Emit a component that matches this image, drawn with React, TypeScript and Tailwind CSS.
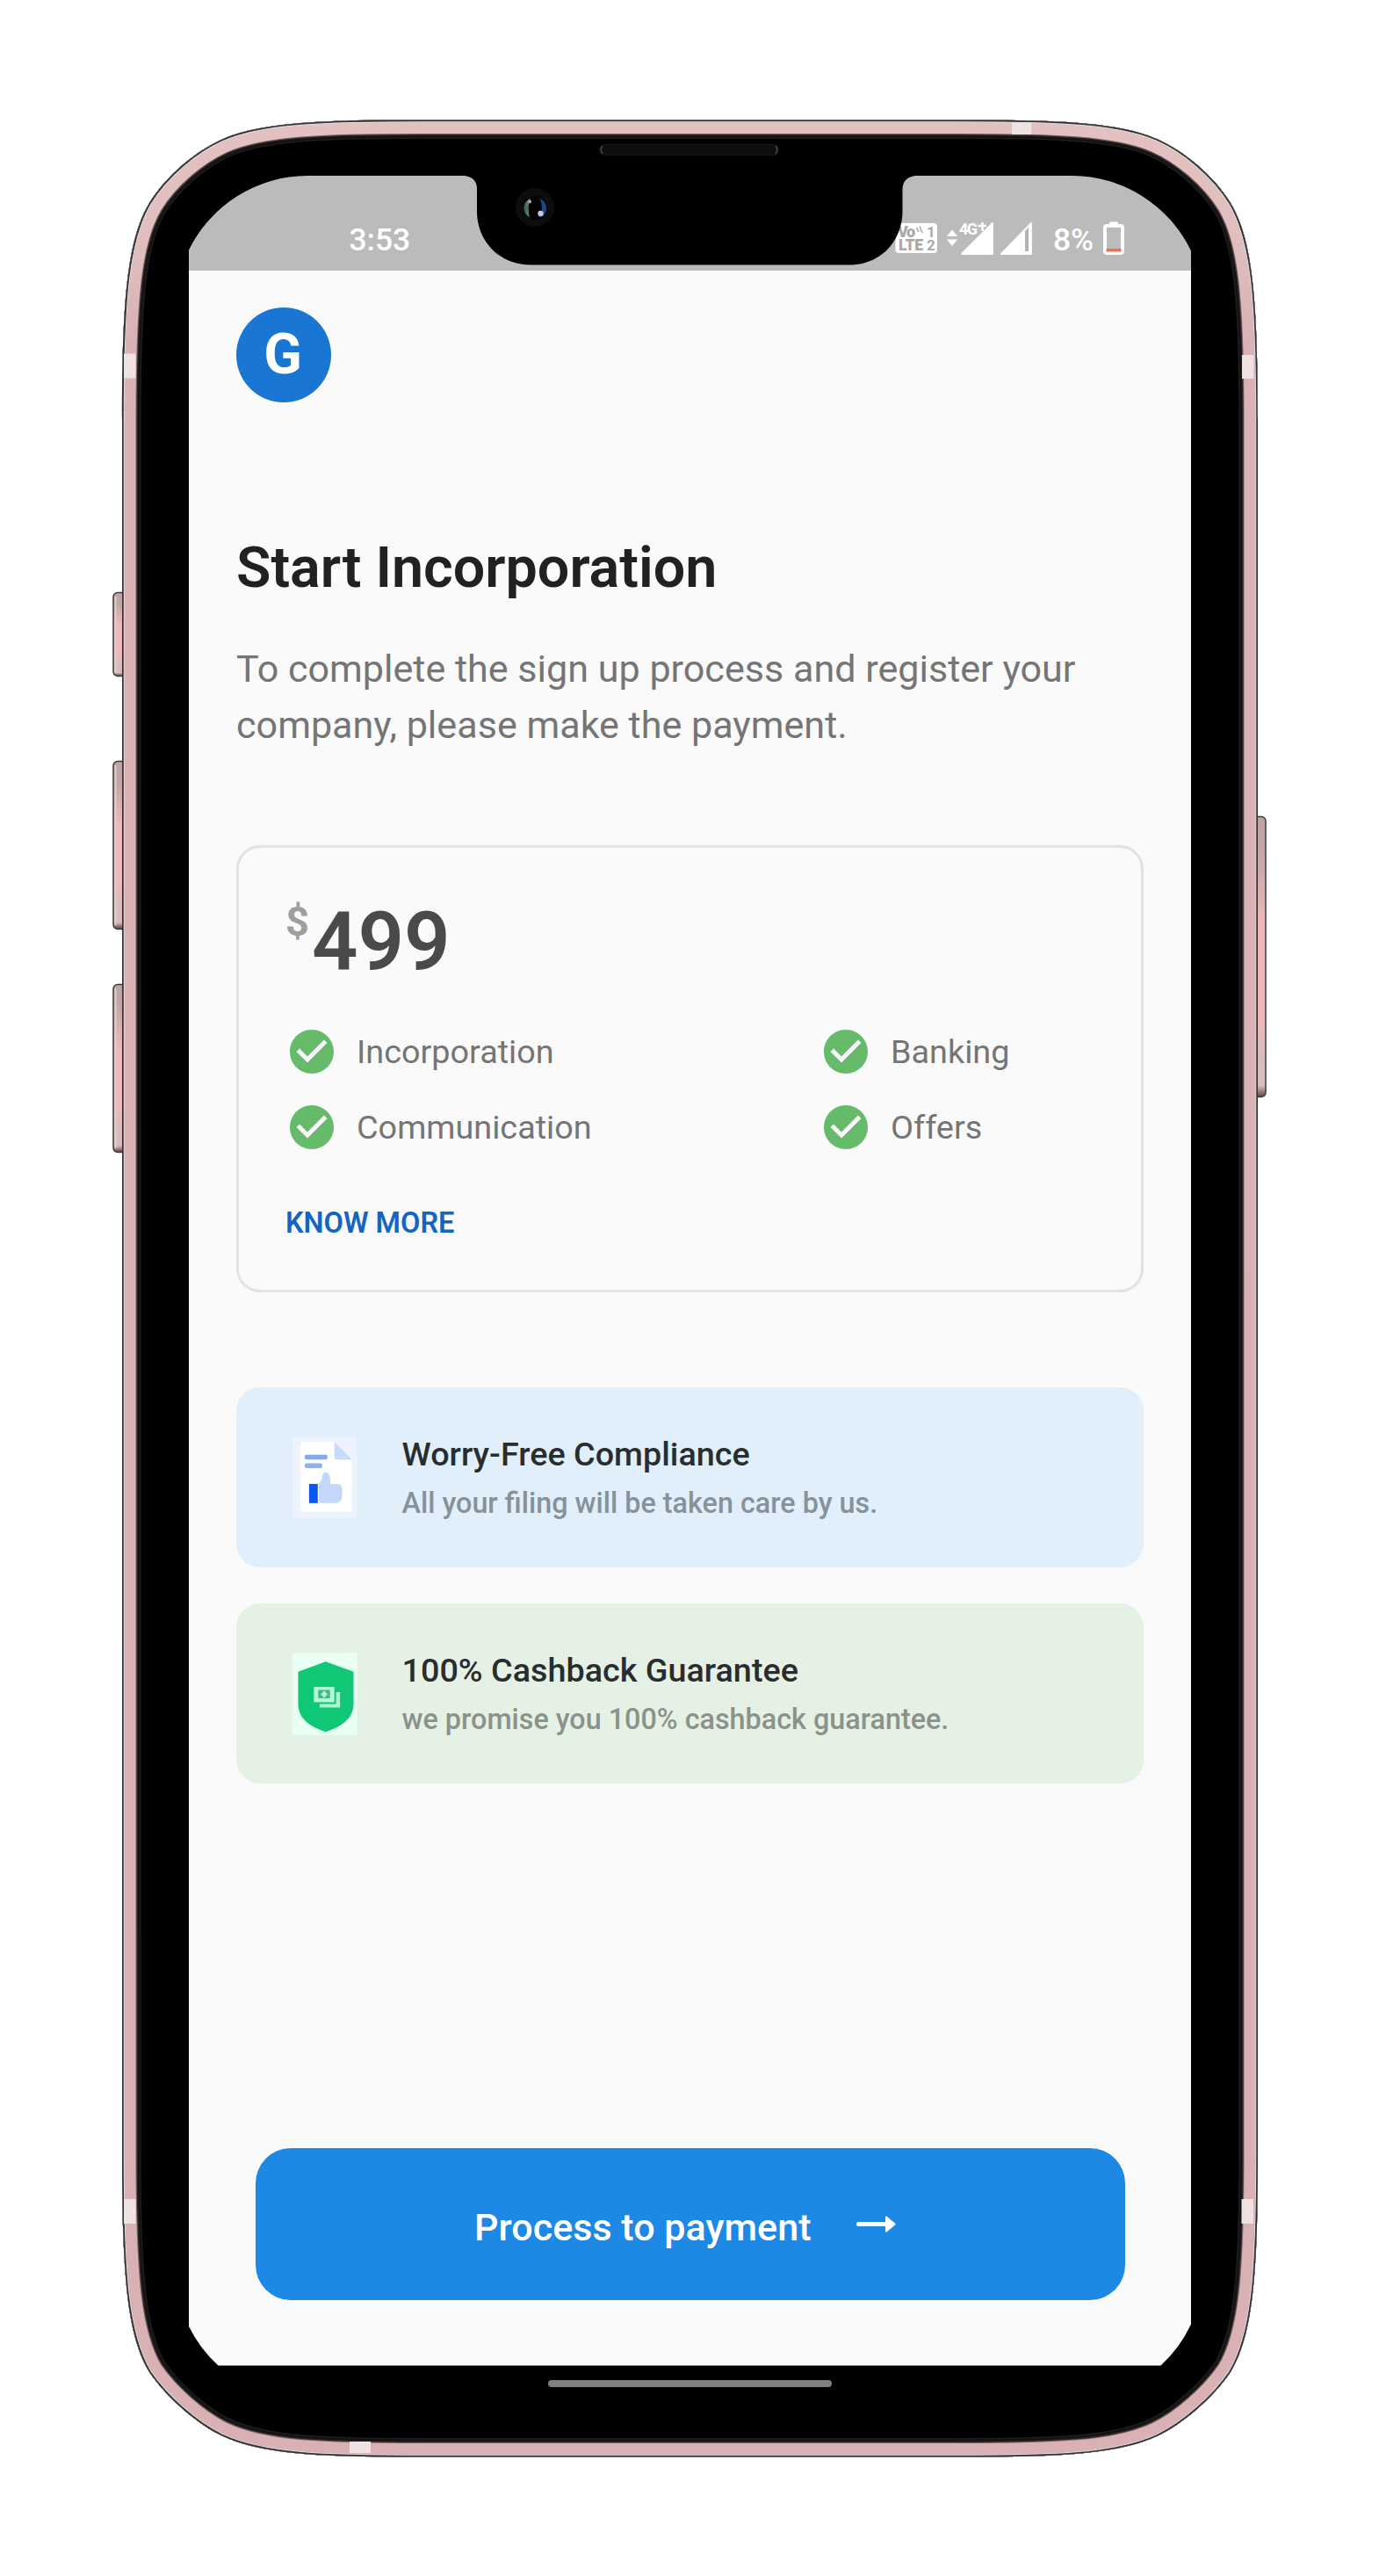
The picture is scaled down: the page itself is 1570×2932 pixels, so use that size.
import React from "react";
import { MdCheckCircle } from "react-icons/md";

const OUTER =
  "M139 480C139 340 145 273 170 231C190 199 223 172 253 158.500C298 138.500 370 136.5 480 136.5H1091C1201 136.5 1273 138.500 1318 158.500C1348 172 1381 199 1401 231C1426 273 1432 340 1432 480V2452C1432 2592 1426 2658 1401 2700C1382 2728 1347 2759 1318 2772.500C1271 2794.500 1201 2796.5 1091 2796.5H480C370 2796.5 300 2794.500 253 2772.500C224 2759 189 2728 170 2700C145 2658 139 2592 139 2452Z";

const SCREEN =
  "M215 284.5A151 151 0 0 1 350 200H529Q543 202 543 215V240C543 276 570 301.5 604 301.5H967C1001 301.5 1027.500 276 1027.500 240V215Q1028 202 1042 200H1221A151 151 0 0 1 1356 285.500V2645.500A151 151 0 0 1 1321.500 2692.500H248.500A151 151 0 0 1 215 2648Z";

function SideButton({ x, y, w, h, fill }: { x: number; y: number; w: number; h: number; fill: string }) {
  return <rect x={x} y={y} width={w} height={h} rx="5" fill={fill} stroke="#40383a" strokeWidth="1.5" />;
}

function PhoneFrame() {
  return (
    <svg className="pointer-events-none absolute inset-0" width="1570" height="2932" viewBox="0 0 1570 2932">
      <defs>
        <clipPath id="body">
          <path d={`${OUTER}${SCREEN}`} clipRule="evenodd" />
        </clipPath>
        <linearGradient id="pink" gradientUnits="userSpaceOnUse" x1="0" y1="136" x2="0" y2="2797">
          <stop offset="0" stopColor="#e3c1c0" />
          <stop offset="0.05" stopColor="#e1bfbf" />
          <stop offset="0.09" stopColor="#d9b3b6" />
          <stop offset="1" stopColor="#d9b1b4" />
        </linearGradient>
        <linearGradient id="key" x1="0" y1="0" x2="0" y2="1">
          <stop offset="0" stopColor="#bda5a3" />
          <stop offset="0.12" stopColor="#c3a5a4" />
          <stop offset="0.38" stopColor="#efb7b9" />
          <stop offset="0.72" stopColor="#efb7b9" />
          <stop offset="0.85" stopColor="#dabcbc" />
          <stop offset="0.96" stopColor="#dabcbc" />
          <stop offset="1" stopColor="#5e4146" />
        </linearGradient>
        <linearGradient id="lensL" x1="0" y1="0" x2="1" y2="0">
          <stop offset="0" stopColor="#3d5a4c" />
          <stop offset="1" stopColor="#6a8c79" />
        </linearGradient>
      </defs>
      <SideButton x={129} y={674.5} w={16} h={95} fill="url(#key)" />
      <SideButton x={129} y={866.5} w={16} h={191} fill="url(#key)" />
      <SideButton x={129} y={1120.5} w={16} h={191} fill="url(#key)" />
      <SideButton x={1425} y={929.5} w={16} h={319} fill="url(#key)" />
      <path d="M131.500 679V765M131.500 871V1053M131.500 1125V1307" stroke="#dccfce" strokeWidth="2" />
      <path d={`${OUTER}${SCREEN}`} fill="#000" fillRule="evenodd" />
      <g clipPath="url(#body)" fill="none">
        <path d={OUTER} stroke="#1e1e1e" strokeWidth="43" />
        <path d={OUTER} stroke="#121212" strokeWidth="40" />
        <path d={OUTER} stroke="#2b2324" strokeWidth="36" />
        <path d={OUTER} stroke="#7d6567" strokeWidth="33" />
        <path d={OUTER} stroke="url(#pink)" strokeWidth="31" />
        <path d={OUTER} stroke="#e9e6ea" strokeWidth="5" />
        <path d={OUTER} stroke="#303438" strokeWidth="3.500" />
      </g>
      <g fill="#efe2e3">
        <rect x="1152" y="140" width="22" height="13" />
        <rect x="398" y="2779" width="24" height="13" />
        <rect x="141" y="402.500" width="13.500" height="28" />
        <rect x="1414" y="404" width="13.500" height="27" />
        <rect x="141" y="2503" width="13.500" height="28" />
        <rect x="1413.500" y="2503" width="13.500" height="28" />
      </g>
      <rect x="682.500" y="164.500" width="204" height="12" rx="6" fill="#0e0e0e" stroke="#181818" />
      <path d="M686 166Q682.500 170 686 175M883 166Q886.500 170 883 175" fill="none" stroke="#484848" strokeWidth="1.500" />
      <circle cx="609" cy="236" r="22" fill="#0d0d0d" />
      <circle cx="609" cy="236.500" r="13.500" fill="#030303" />
      <path d="M604 226C599 228 596 232 596.500 238C597 243 600 246 603 247C601 240 601 232 604 226Z" fill="url(#lensL)" />
      <path d="M614 226C620 228 622.500 233 622 239C621 244 618 247 614 247C618 240 618 232 614 226Z" fill="#174a86" />
      <circle cx="603" cy="229.500" r="2" fill="#9fb0a7" />
      <circle cx="615.500" cy="243" r="3.200" fill="#cfc4d8" />
      <circle cx="609" cy="236.500" r="5" fill="#000" />
      <rect x="624" y="2709" width="323" height="8" rx="4" fill="#808080" />
    </svg>
  );
}

function NetworkIcons() {
  return (
    <svg width="160" height="44" viewBox="1017 249 160 44" className="block" fontFamily="Roboto, sans-serif">
      <rect x="1019.500" y="254" width="47.500" height="34" rx="4" fill="#fff" />
      <g fill="#a8a8a8" fontWeight="900">
        <text x="1022" y="269.500" fontSize="18" textLength="20">Vo</text>
        <text x="1055" y="269.500" fontSize="17" fontWeight="700">1</text>
        <text x="1023" y="284.500" fontSize="17.500" textLength="28">LTE</text>
        <text x="1055" y="284.500" fontSize="17" fontWeight="700">2</text>
      </g>
      <path d="M1043.500 259L1046 264M1047 257.500L1050 265" stroke="#b3b3b3" strokeWidth="1.800" />
      <path d="M1078 269L1084 261.500L1090 269ZM1078 272.500H1090L1084 280Z" fill="#fff" />
      <text x="1092" y="267" fontSize="18" fontWeight="700" fill="#fff" textLength="21">4G</text>
      <path d="M1118.500 253V263M1113.500 257H1123" stroke="#fff" strokeWidth="2.500" />
      <path d="M1095 289L1130 254V289Z" fill="#fff" stroke="#fff" strokeWidth="1.800" strokeLinejoin="round" />
      <path d="M1140 289L1174 254V289Z" fill="#fff" stroke="#fff" strokeWidth="1.800" strokeLinejoin="round" />
      <path d="M1167 263L1171 258.500V286H1167Z" fill="#b3b3b3" />
    </svg>
  );
}

function BatteryIcon() {
  return (
    <svg width="24" height="38" viewBox="0 0 24 38" className="block">
      <path d="M7 3V1.500Q7 .5 8 .5H16Q17 .5 17 1.500V3H20Q24 3 24 7V34Q24 38 20 38H4Q0 38 0 34V7Q0 3 4 3Z" fill="#fff" />
      <rect x="4" y="7" width="16" height="24" fill="#bbb" />
      <rect x="3.500" y="31" width="17" height="3.500" fill="#f0704d" />
    </svg>
  );
}

function DocumentIcon() {
  return (
    <svg width="73.500" height="94" viewBox="0 0 74 94" className="block">
      <rect width="74" height="94" fill="#eef2fe" />
      <path d="M10 6H48L68 26V84Q68 86 66 86H12Q9 86 9 84V8Q9 6 10 6Z" fill="#fff" />
      <path d="M48 6L68 26H51Q48 26 48 23Z" fill="#c8dafb" />
      <rect x="14" y="20.500" width="26" height="5.500" rx="2" fill="#86aae9" />
      <rect x="14" y="30.500" width="20" height="5.500" rx="2" fill="#8fb0ea" />
      <rect x="19" y="54" width="10" height="22" fill="#0b57f0" />
      <path d="M30 54C33 51 34 48 34.500 44Q35 40 38.500 40.500Q44 42 43.500 54H52Q57 55 57 60V67Q57 76 49 76H30Z" fill="#c4d8fb" />
    </svg>
  );
}

function ShieldIcon() {
  return (
    <svg width="73.500" height="94" viewBox="0 0 74 94" className="block">
      <rect width="74" height="94" fill="#e8fff3" />
      <path d="M38 10L70 21.500V58C70 75 57 84 38 90.500C19 84 6.500 75 6.500 58V21.500Z" fill="#10c775" />
      <path d="M52 45H54.500V62.500H31V58.500H50V45Z" fill="#a9f5d2" />
      <rect x="24.500" y="39" width="23.500" height="17.500" fill="#b4f8d8" />
      <rect x="29.500" y="42.500" width="13.500" height="9.500" fill="#45b585" />
      <path d="M36.300 44V51M33 47.500H39.600" stroke="#b4f8d8" strokeWidth="3" />
    </svg>
  );
}

function Perk({ label }: { label: string }) {
  return (
    <div className="flex h-[60px] items-center">
      <MdCheckCircle className="size-[60px] shrink-0 text-[#66bb6a]" />
      <span className="ml-[21px] text-[37.8px] leading-[60px] text-[#757575]">{label}</span>
    </div>
  );
}

function Feature({ icon, title, text, tone, textTone }: { icon: React.ReactNode; title: string; text: string; tone: string; textTone: string }) {
  return (
    <div className={`flex h-[205px] rounded-[27px] pl-[64px] pt-[54px] ${tone}`}>
      <div className="mt-[2px]">{icon}</div>
      <div className="ml-[51px] flex flex-col gap-[14px] font-medium">
        <h2 className="text-[37.75px] leading-[44px]">{title}</h2>
        <p className={`text-[32.35px] leading-[40px] ${textTone}`}>{text}</p>
      </div>
    </div>
  );
}

export default function App() {
  return (
    <div className="relative h-[2932px] w-[1570px] overflow-hidden bg-white pl-[215px] pt-[200px] font-['Roboto',sans-serif]">
      <main className="flex h-[2492.5px] w-[1141px] flex-col bg-[#fafafa]">
        <header className="flex h-[107.5px] items-start bg-[#bbbbbb] text-white">
          <span className="ml-[182.5px] mt-[52px] text-[35.4px] font-medium leading-[42px]">3:53</span>
          <div className="ml-auto mr-[76px] mt-[49px] flex items-start">
            <NetworkIcons />
            <span className="ml-[22px] mt-[3px] w-[57px] text-[35.4px] font-medium leading-[42px]">8%</span>
            <div className="mt-[3px]">
              <BatteryIcon />
            </div>
          </div>
        </header>

        <div className="flex flex-col px-[54px]">
          <div className="mt-[42px] flex size-[108px] items-center justify-center rounded-full bg-[#1976d2] pr-[2px] text-[64px] font-bold leading-none text-white">
            G
          </div>
          <h1 className="mt-[148px] text-[64.6px] font-semibold leading-[80px] text-[#212121]">Start Incorporation</h1>
          <p className="mt-[44px] whitespace-nowrap text-[43.1px] leading-[64px] text-[#757575]">
            To complete the sign up process and register your
            <br />
            company, please make the payment.
          </p>

          <section className="mt-[104.5px] h-[508.5px] rounded-[27px] border-[3px] border-[#e2e2e2] pl-[53px] pt-[58px]">
            <div className="flex h-[100px] items-start">
              <span className="mt-[-2px] text-[47px] font-bold leading-[56px] text-[#9e9e9e]">$</span>
              <span className="ml-[3px] text-[92px] font-semibold leading-[100px] text-[#4a4a4a]">499</span>
            </div>
            <div className="mt-[44px] grid grid-cols-[608px_1fr] gap-y-[26px]">
              <Perk label="Incorporation" />
              <Perk label="Banking" />
              <Perk label="Communication" />
              <Perk label="Offers" />
            </div>
            <a className="mt-[59px] block text-[32.5px] font-semibold leading-[40px] text-[#1565c0]">KNOW MORE</a>
          </section>

          <div className="mt-[108.5px] flex flex-col gap-[40.5px] text-[#2a2d30]">
            <Feature
              icon={<DocumentIcon />}
              title="Worry-Free Compliance"
              text="All your filing will be taken care by us."
              tone="bg-[#e1effa]"
              textTone="text-[#87919a]"
            />
            <Feature
              icon={<ShieldIcon />}
              title="100% Cashback Guarantee"
              text="we promise you 100% cashback guarantee."
              tone="bg-[#e6f1e5]"
              textTone="text-[#8a928a]"
            />
          </div>

          <button className="mx-[21.5px] mt-[415px] flex h-[173px] items-center rounded-[40px] bg-[#1e88e5] pl-[249.5px] text-[43.1px] font-medium text-white">
            <span className="mt-[9px] leading-[50px]">Process to payment</span>
            <svg className="ml-[51px]" width="45" height="20" viewBox="0 0 45 20">
              <path d="M2.500 10.500H36" stroke="#fff" strokeWidth="5" strokeLinecap="round" />
              <path d="M33 2Q33 .5 35 2L44 9.500Q45 10.500 44 11.500L35 19Q33 20.500 33 19Z" fill="#fff" />
            </svg>
          </button>
        </div>
      </main>
      <PhoneFrame />
    </div>
  );
}
